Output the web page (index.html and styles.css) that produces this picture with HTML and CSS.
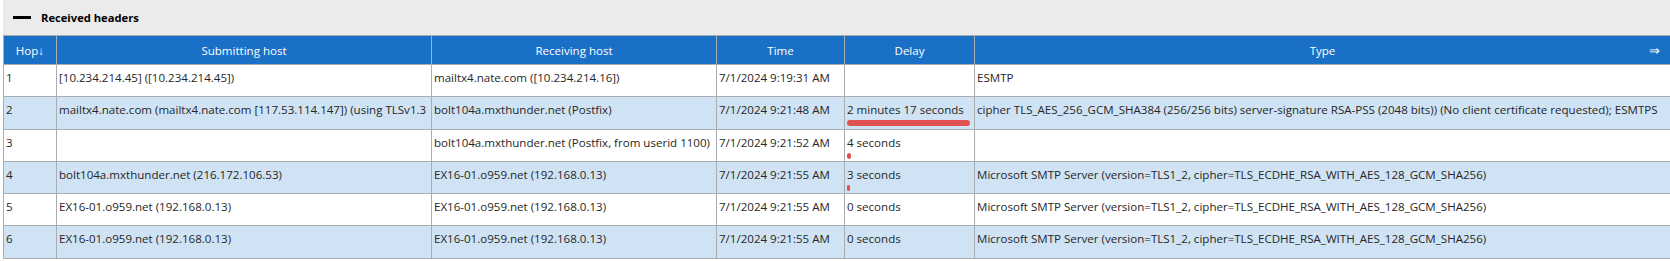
FILE: index.html
```html
<!DOCTYPE html>
<html lang="en">
<head>
<meta charset="utf-8">
<title>Received headers</title>
<link rel="stylesheet" href="styles.css">
</head>
<body>
<div class="panel">
  <div class="panel-head">
    <span class="collapse-dash"></span>
    <span class="panel-title">Received headers</span>
  </div>
  <table class="hops">
    <colgroup>
      <col class="c-hop">
      <col class="c-sub">
      <col class="c-rec">
      <col class="c-time">
      <col class="c-delay">
      <col class="c-type">
    </colgroup>
    <thead>
      <tr>
        <th>Hop↓</th>
        <th>Submitting host</th>
        <th>Receiving host</th>
        <th>Time</th>
        <th>Delay</th>
        <th class="th-type">Type<span class="arrow">⇒</span></th>
      </tr>
    </thead>
    <tbody>
      <tr>
        <td>1</td>
        <td>[10.234.214.45] ([10.234.214.45])</td>
        <td>mailtx4.nate.com ([10.234.214.16])</td>
        <td>7/1/2024 9:19:31 AM</td>
        <td class="delay"></td>
        <td>ESMTP</td>
      </tr>
      <tr>
        <td>2</td>
        <td>mailtx4.nate.com (mailtx4.nate.com [117.53.114.147]) (using TLSv1.3</td>
        <td>bolt104a.mxthunder.net (Postfix)</td>
        <td>7/1/2024 9:21:48 AM</td>
        <td class="delay"><div class="delay-text">2 minutes 17 seconds</div><div class="bar" style="width:123px"></div></td>
        <td>cipher TLS_AES_256_GCM_SHA384 (256/256 bits) server-signature RSA-PSS (2048 bits)) (No client certificate requested); ESMTPS</td>
      </tr>
      <tr>
        <td>3</td>
        <td></td>
        <td>bolt104a.mxthunder.net (Postfix, from userid 1100)</td>
        <td>7/1/2024 9:21:52 AM</td>
        <td class="delay"><div class="delay-text">4 seconds</div><div class="bar" style="width:4px"></div></td>
        <td></td>
      </tr>
      <tr>
        <td>4</td>
        <td>bolt104a.mxthunder.net (216.172.106.53)</td>
        <td>EX16-01.o959.net (192.168.0.13)</td>
        <td>7/1/2024 9:21:55 AM</td>
        <td class="delay"><div class="delay-text">3 seconds</div><div class="bar" style="width:3px"></div></td>
        <td>Microsoft SMTP Server (version=TLS1_2, cipher=TLS_ECDHE_RSA_WITH_AES_128_GCM_SHA256)</td>
      </tr>
      <tr>
        <td>5</td>
        <td>EX16-01.o959.net (192.168.0.13)</td>
        <td>EX16-01.o959.net (192.168.0.13)</td>
        <td>7/1/2024 9:21:55 AM</td>
        <td class="delay"><div class="delay-text">0 seconds</div></td>
        <td>Microsoft SMTP Server (version=TLS1_2, cipher=TLS_ECDHE_RSA_WITH_AES_128_GCM_SHA256)</td>
      </tr>
      <tr>
        <td>6</td>
        <td>EX16-01.o959.net (192.168.0.13)</td>
        <td>EX16-01.o959.net (192.168.0.13)</td>
        <td>7/1/2024 9:21:55 AM</td>
        <td class="delay"><div class="delay-text">0 seconds</div></td>
        <td>Microsoft SMTP Server (version=TLS1_2, cipher=TLS_ECDHE_RSA_WITH_AES_128_GCM_SHA256)</td>
      </tr>
    </tbody>
  </table>
</div>
</body>
</html>
```
FILE: styles.css
```css
html, body {
  margin: 0;
  padding: 0;
  background: #ffffff;
}

body {
  font-family: "Open Sans", "Noto Sans", sans-serif;
  font-size: 11.55px;
  color: #262626;
}

.panel {
  margin-left: 3px;
  width: 1667px;
}

.panel-head {
  display: flex;
  align-items: center;
  gap: 10px;
  height: 35px;
  padding-left: 10px;
  background: #ebebeb;
  box-sizing: border-box;
}

.collapse-dash {
  display: block;
  width: 18px;
  height: 3px;
  background: #000000;
}

.panel-title {
  font-weight: 700;
  font-size: 11.2px;
  color: #000000;
}

.hops {
  width: 1667px;
  border-collapse: collapse;
  table-layout: fixed;
}

.c-hop { width: 53px; }
.c-sub { width: 375px; }
.c-rec { width: 285px; }
.c-time { width: 128px; }
.c-delay { width: 130px; }
.c-type { width: 696px; }

.hops th,
.hops td {
  border: 1px solid #a7adb0;
  padding: 0 2px;
  white-space: nowrap;
  overflow: hidden;
}

.hops th {
  height: 28px;
  background: #1a70c6;
  color: #ffffff;
  font-weight: 400;
  text-align: center;
  vertical-align: middle;
}

.th-type {
  position: relative;
}

.arrow {
  position: absolute;
  right: 10px;
  top: 50%;
  transform: translateY(-50%);
  font-size: 13px;
}

.hops td {
  height: 32.3px;
  line-height: 16px;
  vertical-align: top;
  padding-top: 5px;
  box-sizing: border-box;
}

.hops tbody tr:nth-child(even) td {
  background: #cfe3f4;
}

.delay-text {
  height: 16px;
}

.bar {
  height: 6px;
  margin-top: 2px;
  border-radius: 3px;
  background: #e05252;
}
```
